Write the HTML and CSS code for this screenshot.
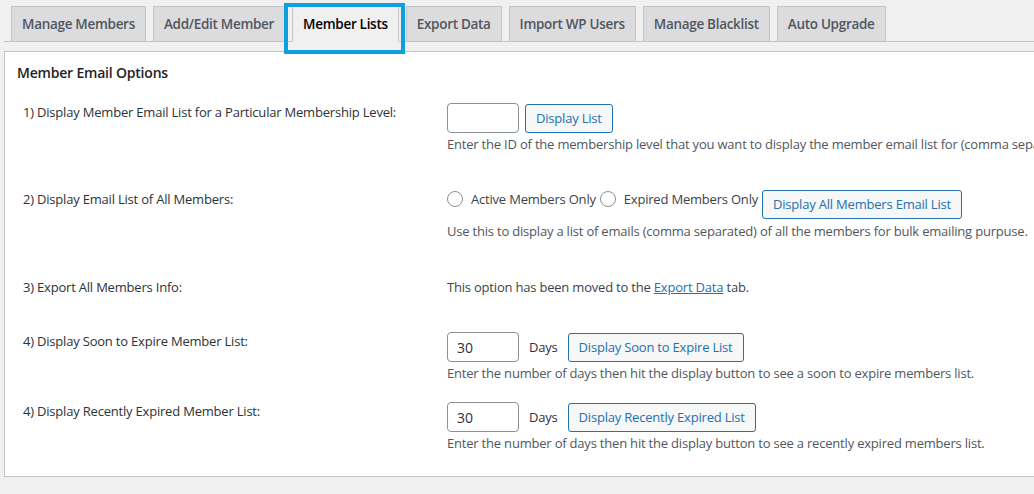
FILE: index.html
```html
<!DOCTYPE html>
<html lang="en">
<head>
<meta charset="utf-8">
<title>Member Lists</title>
<link rel="stylesheet" href="styles.css">
</head>
<body>
<div class="wrap">
  <nav class="tabs">
    <a class="tab" href="#">Manage Members</a>
    <a class="tab" href="#">Add/Edit Member</a>
    <a class="tab tab-active" href="#">Member Lists</a>
    <a class="tab" href="#">Export Data</a>
    <a class="tab" href="#">Import WP Users</a>
    <a class="tab" href="#">Manage Blacklist</a>
    <a class="tab" href="#">Auto Upgrade</a>
  </nav>

  <div class="panel">
    <h3 class="panel-title">Member Email Options</h3>

    <div class="row row-1">
      <div class="label">1) Display Member Email List for a Particular Membership Level:</div>
      <div class="field">
        <div class="controls">
          <input class="text-input" type="text" value="">
          <button class="btn">Display List</button>
        </div>
        <p class="desc">Enter the ID of the membership level that you want to display the member email list for (comma separated IDs are accepted).</p>
      </div>
    </div>

    <div class="row row-2">
      <div class="label">2) Display Email List of All Members:</div>
      <div class="field">
        <div class="controls controls-top">
          <label class="radio-label"><span class="radio"></span>Active Members Only</label>
          <label class="radio-label radio-label-2"><span class="radio"></span>Expired Members Only</label>
          <button class="btn btn-radio">Display All Members Email List</button>
        </div>
        <p class="desc desc-2">Use this to display a list of emails (comma separated) of all the members for bulk emailing purpuse.</p>
      </div>
    </div>

    <div class="row row-3">
      <div class="label">3) Export All Members Info:</div>
      <div class="field">
        <p class="plain">This option has been moved to the <a class="link" href="#">Export Data</a> tab.</p>
      </div>
    </div>

    <div class="row row-4">
      <div class="label">4) Display Soon to Expire Member List:</div>
      <div class="field">
        <div class="controls">
          <input class="text-input" type="text" value="30">
          <span class="days">Days</span>
          <button class="btn">Display Soon to Expire List</button>
        </div>
        <p class="desc">Enter the number of days then hit the display button to see a soon to expire members list.</p>
      </div>
    </div>

    <div class="row row-5">
      <div class="label">4) Display Recently Expired Member List:</div>
      <div class="field">
        <div class="controls">
          <input class="text-input" type="text" value="30">
          <span class="days">Days</span>
          <button class="btn">Display Recently Expired List</button>
        </div>
        <p class="desc">Enter the number of days then hit the display button to see a recently expired members list.</p>
      </div>
    </div>
  </div>
</div>
</body>
</html>
```

FILE: styles.css
```css
html, body {
  margin: 0;
  padding: 0;
  overflow: hidden;
}

body {
  background: #f0f0f1;
  font-family: "Open Sans", "Noto Sans", "Liberation Sans", sans-serif;
  font-size: 13px;
  letter-spacing: -0.2px;
  color: #1d2327;
}

.wrap {
  width: 1100px;
  padding-left: 4px;
}

/* Tabs */
.tabs {
  display: flex;
  align-items: flex-end;
  padding-top: 6px;
  border-bottom: 1px solid #c3c4c7;
}

.tab {
  position: relative;
  display: block;
  margin-left: 7px;
  margin-bottom: -1px;
  padding: 5px 10px;
  font-size: 13.5px;
  font-weight: 600;
  letter-spacing: -0.3px;
  line-height: 24px;
  color: #50575e;
  background: #dcdcde;
  border: 1px solid #c3c4c7;
  text-decoration: none;
  white-space: nowrap;
}

.tab-active {
  background: #f0f0f1;
  color: #000;
  border-bottom-color: #f0f0f1;
}

.tab-active::after {
  content: "";
  position: absolute;
  left: -9px;
  right: -7px;
  top: -4px;
  bottom: -13px;
  border: 4px solid #0aa1dd;
  z-index: 5;
  pointer-events: none;
}

/* Panel */
.panel {
  margin-top: 9px;
  background: #fff;
  border: 1px solid #c3c4c7;
  box-shadow: 0 1px 1px rgba(0, 0, 0, 0.04);
  padding: 11px 12px 24px;
}

.panel-title {
  margin: 0 0 20px;
  font-size: 14px;
  font-weight: 600;
  line-height: 20px;
  color: #1d2327;
}

.row {
  display: grid;
  grid-template-columns: 424px 1fr;
  margin-left: 6px;
}

.row-1 { margin-bottom: 37px; }
.row-2 { margin-bottom: 38px; }
.row-3 { margin-bottom: 36px; }
.row-4 { margin-bottom: 20px; }

.label {
  line-height: 18px;
  color: #2c3338;
}

.field {
  min-width: 0;
}

.controls {
  display: flex;
  align-items: center;
  white-space: nowrap;
}

.controls-top {
  align-items: flex-start;
}

.text-input {
  box-sizing: border-box;
  width: 72px;
  height: 30px;
  margin: 0;
  padding: 0 9px;
  border: 1px solid #8c8f94;
  border-radius: 4px;
  background: #fff;
  font-family: inherit;
  font-size: 14px;
  color: #2c3338;
  outline: none;
}

.btn {
  box-sizing: border-box;
  height: 29px;
  margin: 0 0 0 6px;
  padding: 0 10px;
  border: 1px solid #2271b1;
  border-radius: 3px;
  background: #f6f7f7;
  color: #2271b1;
  font-family: inherit;
  font-size: 13px;
  letter-spacing: -0.2px;
  line-height: 27px;
  white-space: nowrap;
  cursor: pointer;
}

.days {
  margin-left: 10px;
  margin-right: 4px;
  color: #2c3338;
}

.radio-label {
  display: flex;
  align-items: center;
  line-height: 18px;
  color: #3c434a;
}

.radio-label-2 {
  margin-left: 4px;
}

.radio {
  box-sizing: border-box;
  width: 16px;
  height: 16px;
  margin-right: 8px;
  border: 1px solid #8c8f94;
  border-radius: 50%;
  background: #fff;
}

.btn-radio {
  margin-left: 4px;
}

.desc {
  margin: 2px 0 0;
  line-height: 18px;
  color: #50575e;
  white-space: nowrap;
}

.desc-2 {
  margin-top: 3px;
}

.plain {
  margin: 0;
  line-height: 18px;
  color: #3c434a;
}

.link {
  color: #2271b1;
  text-decoration: underline;
}
```
